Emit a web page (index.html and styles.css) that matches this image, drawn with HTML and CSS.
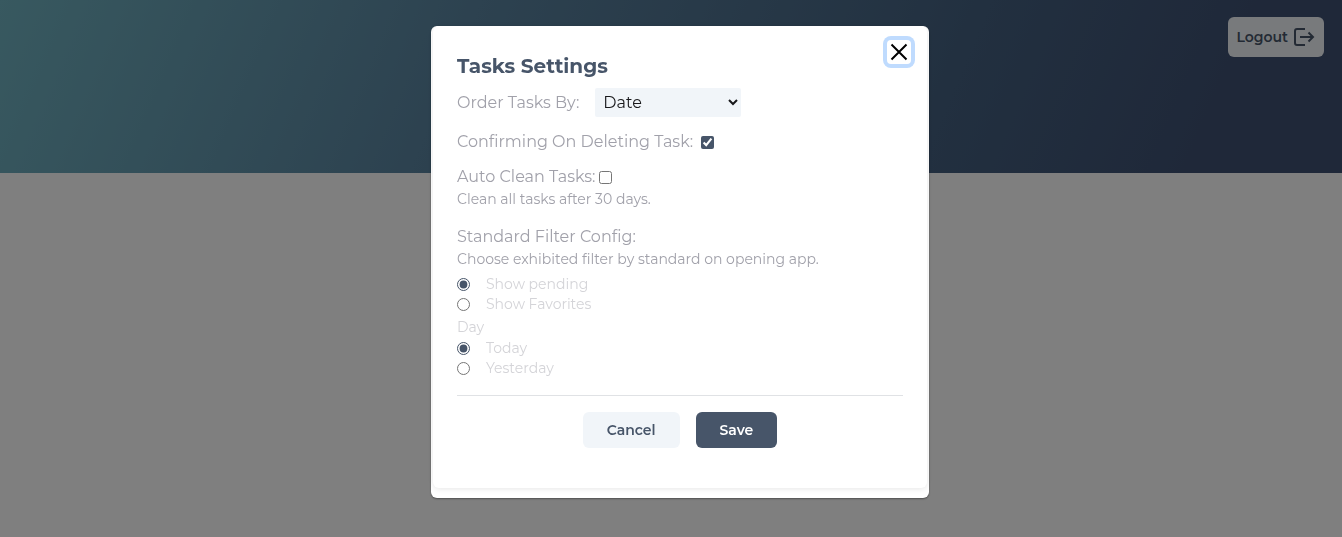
FILE: index.html
```
<!DOCTYPE html>
<html lang="en">
<head>
<meta charset="utf-8">
<meta name="viewport" content="width=device-width, initial-scale=1">
<title>Tasks Settings</title>
<link rel="stylesheet" href="styles.css">
</head>
<body>
<header class="hero">
  <button class="logout" type="button">Logout
    <svg class="logout-icon" viewBox="0 0 24 22" aria-hidden="true"><path d="M13 3H5Q3 3 3 5V17Q3 19 5 19H13M8 11H20.500M16.500 6.500L21 11L16.500 15.500"/></svg>
  </button>
</header>
<div class="overlay">
  <section class="modal" role="dialog" aria-modal="true" aria-labelledby="title">
    <button class="close" type="button" aria-label="Close">
      <svg class="close-icon" viewBox="0 0 18 18" aria-hidden="true"><path d="M1.500 1.500L16.500 16.500M16.500 1.500L1.500 16.500"/></svg>
    </button>
    <form class="panel">
      <h1 class="title" id="title">Tasks Settings</h1>
      <div class="row order">
        <label for="order">Order Tasks By:</label>
        <select class="select" id="order"><option>Date</option><option>Name</option></select>
      </div>
      <div class="row confirm">
        <label for="confirm">Confirming On Deleting Task:</label>
        <input class="tick" type="checkbox" id="confirm" checked>
      </div>
      <div class="row clean">
        <label for="clean">Auto Clean Tasks:</label>
        <input class="tick" type="checkbox" id="clean">
      </div>
      <p class="hint">Clean all tasks after 30 days.</p>
      <h2 class="subtitle">Standard Filter Config:</h2>
      <p class="hint">Choose exhibited filter by standard on opening app.</p>
      <div class="choices">
        <label class="choice"><input class="tick" type="radio" name="filter" checked>Show pending</label>
        <label class="choice"><input class="tick" type="radio" name="filter">Show Favorites</label>
      </div>
      <p class="day">Day</p>
      <div class="choices">
        <label class="choice"><input class="tick" type="radio" name="day" checked>Today</label>
        <label class="choice"><input class="tick" type="radio" name="day">Yesterday</label>
      </div>
      <div class="actions">
        <button class="button" type="button">Cancel</button>
        <button class="button primary" type="submit">Save</button>
      </div>
    </form>
  </section>
</div>
</body>
</html>
```
FILE: styles.css
```
* { box-sizing: border-box; }
body {
  margin: 0;
  min-height: 100vh;
  background: #fff;
  color: #a1a1aa;
  font: 400 16px/24px Montserrat, Inter, sans-serif;
}
h1, h2, p { margin: 0; }
button, select { font-family: inherit; }
.hero {
  display: flex;
  justify-content: flex-end;
  align-items: flex-start;
  min-height: 173px;
  padding: 17px 18px;
  background: linear-gradient(113deg, #70b2c0 0%, #5a84a0 34%, #446080 70%, #3e5072 90%, #3e5072 100%);
}
.logout {
  display: flex;
  align-items: center;
  gap: 4px;
  height: 40px;
  padding: 0 8px;
  border: 0;
  border-radius: 6px;
  background: #f1f5f9;
  color: #475569;
  font-size: 14px;
  font-weight: 600;
}
.logout-icon {
  width: 24px;
  height: 22px;
  fill: none;
  stroke: currentColor;
  stroke-width: 2;
}
.overlay {
  position: fixed;
  inset: 0;
  display: flex;
  justify-content: center;
  align-items: flex-start;
  padding: 26px 18px 26px 36px;
  background: rgba(0, 0, 0, .5);
  overflow: auto;
}
.modal {
  position: relative;
  width: 100%;
  max-width: 498px;
  padding: 0 2px 10px;
  border-radius: 6px;
  background: #fff;
  box-shadow: 0 1px 2px rgba(0, 0, 0, .4);
}
.panel {
  padding: 28px 24px 40px;
  border-radius: 6px;
  background: #fff;
  box-shadow: 0 1px 6px rgba(0, 0, 0, .1);
}
.close {
  position: absolute;
  top: 14px;
  right: 18px;
  display: grid;
  place-items: center;
  width: 24px;
  height: 24px;
  padding: 0;
  border: 0;
  border-radius: 4px;
  background: #fff;
  box-shadow: 0 0 0 4px #bfdbfe;
}
.close-icon {
  width: 18px;
  height: 18px;
  fill: none;
  stroke: #000;
  stroke-width: 2;
}
.title {
  color: #475569;
  font-size: 20px;
  line-height: 24px;
  font-weight: 700;
}
.row { display: flex; align-items: center; }
.order { gap: 16px; margin-top: 10px; }
.select {
  width: 146px;
  height: 29px;
  padding: 0 4px;
  border: 0;
  border-radius: 2px;
  background: #f1f5f9;
  color: #18181b;
  font-size: 16px;
  font-weight: 400;
}
.tick {
  width: 13px;
  height: 13px;
  margin: 0;
  accent-color: #475569;
}
.confirm { gap: 8px; margin-top: 13px; }
.clean { gap: 4px; margin-top: 11px; }
.hint { font-size: 14px; line-height: 20px; }
.subtitle {
  margin-top: 16px;
  font-size: 16px;
  line-height: 24px;
  font-weight: 400;
}
.choices { display: grid; margin-top: 5px; }
.choice {
  display: flex;
  align-items: center;
  gap: 16px;
  color: #d4d4d8;
  font-size: 14px;
  line-height: 20px;
}
.day {
  margin-top: 3px;
  color: #d4d4d8;
  font-size: 14px;
  line-height: 20px;
}
.day + .choices { margin-top: 1px; }
.actions {
  display: flex;
  justify-content: center;
  gap: 16px;
  margin-top: 17px;
  padding-top: 16px;
  border-top: 1px solid #e0e2e5;
}
.button {
  height: 36px;
  padding: 0 24px;
  border: 0;
  border-radius: 6px;
  background: #f1f5f9;
  color: #475569;
  font-size: 14px;
  font-weight: 600;
}
.primary { background: #475569; color: #fff; }
```
